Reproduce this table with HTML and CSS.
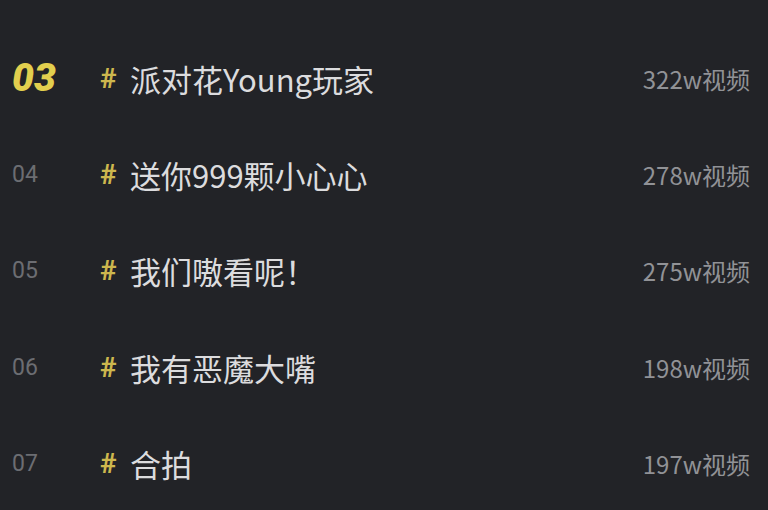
FILE: index.html
```html
<!DOCTYPE html>
<html lang="zh-CN">
<head>
<meta charset="utf-8">
<title>热门话题</title>
<link rel="stylesheet" href="styles.css">
</head>
<body>
<ul class="list">
  <li class="row">
    <span class="rank rank-top">03</span>
    <span class="tag">#</span>
    <span class="title">派对花Young玩家</span>
    <span class="count">322w视频</span>
  </li>
  <li class="row">
    <span class="rank">04</span>
    <span class="tag">#</span>
    <span class="title">送你999颗小心心</span>
    <span class="count">278w视频</span>
  </li>
  <li class="row">
    <span class="rank">05</span>
    <span class="tag">#</span>
    <span class="title">我们嗷看呢！</span>
    <span class="count">275w视频</span>
  </li>
  <li class="row">
    <span class="rank">06</span>
    <span class="tag">#</span>
    <span class="title">我有恶魔大嘴</span>
    <span class="count">198w视频</span>
  </li>
  <li class="row">
    <span class="rank">07</span>
    <span class="tag">#</span>
    <span class="title">合拍</span>
    <span class="count">197w视频</span>
  </li>
</ul>
</body>
</html>
```
FILE: styles.css
```css
html, body {
  margin: 0;
  padding: 0;
  background: #222327;
  height: 100%;
  overflow: hidden;
}
body {
  font-family: "Noto Sans CJK SC", "Noto Sans", sans-serif;
}
.list {
  list-style: none;
  margin: 0;
  padding: 30px 18px 0 12px;
}
.row {
  display: flex;
  align-items: center;
  height: 96.3px;
}
.rank {
  width: 88px;
  flex: none;
  font-family: "Roboto", "Liberation Sans", sans-serif;
  font-size: 23px;
  color: #6c6d72;
}
.rank-top {
  font-size: 39px;
  font-weight: 900;
  font-style: italic;
  color: #e2cf4e;
}
.tag {
  width: 30px;
  flex: none;
  font-family: "Roboto", "Liberation Sans", sans-serif;
  font-size: 28px;
  font-weight: 700;
  color: #cdb74e;
}
.title {
  flex: 1;
  font-size: 31px;
  font-weight: 400;
  color: #dcdcde;
  white-space: nowrap;
}
.count {
  flex: none;
  font-size: 24px;
  color: #919296;
}
```
